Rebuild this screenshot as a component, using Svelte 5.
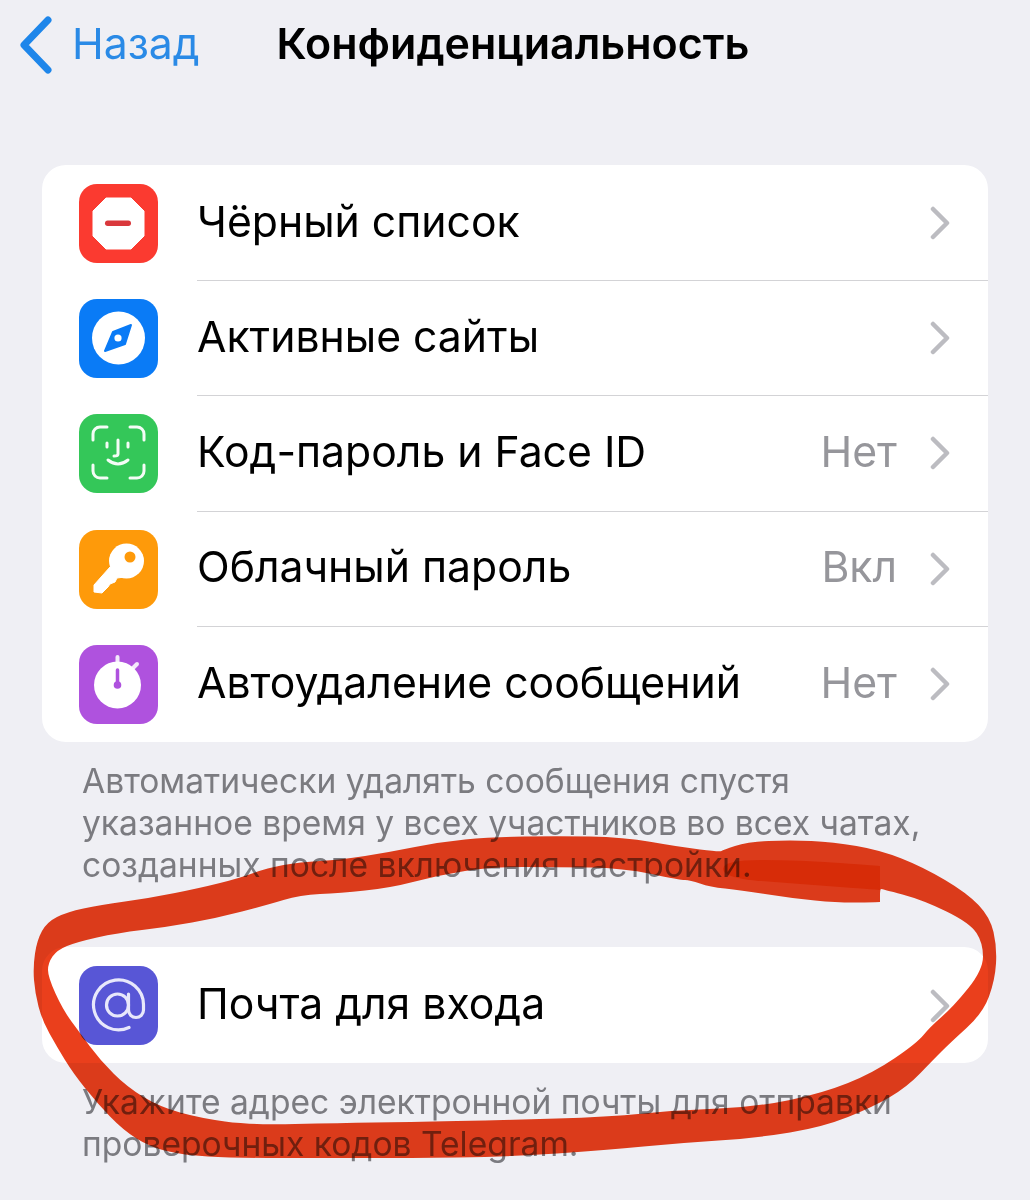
<script>
  const rows = [
    { id: 'block', label: 'Чёрный список', value: '' },
    { id: 'sites', label: 'Активные сайты', value: '' },
    { id: 'face', label: 'Код-пароль и Face ID', value: 'Нет' },
    { id: 'key', label: 'Облачный пароль', value: 'Вкл' },
    { id: 'timer', label: 'Автоудаление сообщений', value: 'Нет' }
  ];

  // marker scribble, traced in page coordinates
  const outer = [[720,852],[680,847],[623,837],[557,836],[490,837],[440,842],[390,852],[340,860],[300,862],[267,868],[240,878],[200,888],[150,898],[100,905],[67,912],[47,922],[37,940],[33,967],[35,993],[42,1020],[57,1047],[73,1073],[97,1103],[123,1130],[150,1147],[183,1155],[233,1158],[340,1158],[407,1158],[507,1157],[607,1150],[680,1143],[757,1138],[823,1127],[873,1107],[907,1087],[933,1060],[950,1043],[983,1013],[995,980],[997,947],[990,917],[967,893],[923,867],[880,850],[833,842],[790,840],[747,842],[723,850]];
  const inner = [[880,902],[880,902],[840,903],[790,898],[740,890],[710,887],[690,880],[680,880],[623,868],[557,867],[490,867],[440,875],[390,888],[340,893],[300,895],[267,905],[217,918],[167,927],[117,933],[77,942],[57,950],[48,963],[48,977],[63,1010],[80,1033],[100,1060],[127,1087],[160,1107],[200,1118],[250,1125],[340,1123],[407,1122],[507,1120],[607,1117],[680,1110],[757,1107],[823,1093],[873,1073],[917,1043],[930,1027],[953,1007],[983,970],[983,943],[970,923],[923,900],[882,889],[880,889]];
  const overlap = [[723,860],[800,860],[880,866],[880,866],[880,890],[880,890],[800,884],[723,878]];

  const smooth = (pts) => {
    const mid = (a, b) => [(a[0] + b[0]) / 2, (a[1] + b[1]) / 2];
    let d = `M${mid(pts[pts.length - 1], pts[0]).join(' ')}`;
    pts.forEach((p, i) => {
      d += ` Q${p.join(' ')} ${mid(p, pts[(i + 1) % pts.length]).join(' ')}`;
    });
    return d + 'Z';
  };
  const ring = smooth(outer) + ' ' + smooth(inner);
</script>

{#snippet chevron()}
  <svg class="chevron" viewBox="0 0 22 34" width="22" height="34">
    <path d="M4 3 L18 17 L4 31" fill="none" stroke="#bcbcc1" stroke-width="4.5" stroke-linecap="round" stroke-linejoin="round" />
  </svg>
{/snippet}

{#snippet icon(id)}
  <svg class="icon {id}" viewBox="0 0 79 79" width="79" height="79">
    {#if id === 'block'}
      <path d="M27 14 H52 L65 27 V52 L52 65 H27 L14 52 V27Z" fill="#fff" stroke="#fff" stroke-width="1" stroke-linejoin="round" />
      <rect x="26" y="36.5" width="26" height="5.5" rx="2.7" fill="#d9383c" />
    {:else if id === 'sites'}
      <circle cx="39.5" cy="39" r="26.5" fill="#fff" />
      <path d="M34 33 L52 26 L46 45 L26 52Z" fill="#0a7bf6" stroke="#0a7bf6" stroke-width="2" stroke-linejoin="round" />
      <circle cx="39" cy="39" r="3.6" fill="#fff" />
    {:else if id === 'face'}
      <g fill="none" stroke="#fff" stroke-width="3" stroke-linecap="round" stroke-linejoin="round" opacity="0.95">
        <path d="M14 26 V20 A7 7 0 0 1 21 13 H28" />
        <path d="M51 13 H58 A7 7 0 0 1 65 20 V26" />
        <path d="M14 51 V57 A7 7 0 0 0 21 64 H28" />
        <path d="M51 64 H58 A7 7 0 0 0 65 57 V51" />
        <path d="M28 29 V33 M49 29 V33" />
        <path d="M39 26 V40 Q39 42 35 42" />
        <path d="M29 46 Q39 54 49 46" />
      </g>
    {:else if id === 'key'}
      <circle cx="47.5" cy="31" r="17.5" fill="#fff" />
      <path d="M31 37 L15 55 V62 L23 63 L29 57 L31 54 L36 52 L38 48 L46 47Z" fill="#fff" stroke="#fff" stroke-linejoin="round" />
      <circle cx="51" cy="27" r="5.5" fill="#fe9a0a" />
    {:else if id === 'timer'}
      <rect x="36.5" y="10" width="4" height="10" rx="2" fill="#f3e9fa" />
      <path d="M53 24 L58 19" stroke="#f3e9fa" stroke-width="4" stroke-linecap="round" />
      <circle cx="38.5" cy="40" r="23.5" fill="#fff" />
      <path d="M38.5 25 V40" stroke="#af52de" stroke-width="3.5" stroke-linecap="round" />
      <circle cx="38.5" cy="40" r="3.8" fill="#af52de" />
    {:else}
      <g fill="none" stroke="#e8e8fb" stroke-width="3.2" stroke-linecap="round">
        <circle cx="38.5" cy="39" r="11" />
        <path d="M49.5 28 V44 A7.5 7.5 0 0 0 64.5 44 V39 A25 25 0 1 0 50 61.5" />
      </g>
    {/if}
  </svg>
{/snippet}

<div class="screen">
  <nav class="nav">
    <svg class="back" viewBox="0 0 36 60" width="36" height="60">
      <path d="M30 5 L6 30 L30 55" fill="none" stroke="#1e86ea" stroke-width="7" stroke-linecap="round" stroke-linejoin="round" />
    </svg>
    <span class="back-label">Назад</span>
    <span class="title">Конфиденциальность</span>
  </nav>

  <section class="card">
    {#each rows as row}
      <div class="row">
        {@render icon(row.id)}
        <div class="row-body">
          <span class="label">{row.label}</span>
          <span class="value">{row.value}</span>
          {@render chevron()}
        </div>
      </div>
    {/each}
  </section>
  <p class="note note-first">Автоматически удалять сообщения спустя<br />указанное время у всех участников во всех чатах,<br />созданных после включения настройки.</p>

  <section class="card card-mail">
    <div class="row">
      {@render icon('mail')}
      <div class="row-body">
        <span class="label">Почта для входа</span>
        <span class="value"></span>
        {@render chevron()}
      </div>
    </div>
  </section>
  <p class="note">Укажите адрес электронной почты для отправки<br />проверочных кодов Telegram.</p>

  <svg class="scribble" viewBox="0 0 1030 1200">
    <path d={ring} fill="#ea3f1c" fill-rule="evenodd" />
    <path d={smooth(overlap)} fill="#e62f08" />
  </svg>
</div>

<style>
  :global(body) {
    margin: 0;
    background: #efeff4;
  }
  .screen {
    position: relative;
    width: 1030px;
    height: 1200px;
    overflow: hidden;
    background: #efeff4;
    font-family: Inter, "Noto Sans", sans-serif;
    color: #000;
  }
  .nav {
    display: flex;
    align-items: center;
    height: 90px;
    padding-left: 18px;
    box-sizing: border-box;
  }
  .back {
    flex: none;
  }
  .back-label {
    margin-left: 18px;
    padding-bottom: 3px;
    font-size: 42.7px;
    color: #2a8ae6;
  }
  .title {
    margin-left: 77px;
    padding-bottom: 4px;
    font-size: 43px;
    font-weight: 600;
  }
  .card {
    margin: 75px 42px 0;
    padding-top: 1px;
    background: #fff;
    border-radius: 24px;
    overflow: hidden;
  }
  .card-mail {
    margin-top: 0;
  }
  .row {
    display: flex;
    align-items: center;
    height: 115.2px;
    padding-left: 37px;
  }
  .icon {
    flex: none;
    border-radius: 18px;
  }
  .block { background: #fb3a30; }
  .sites { background: #0a7bf6; }
  .face { background: #34c759; }
  .key { background: #fe9a0a; }
  .timer { background: #af52de; }
  .mail { background: #5856d6; }
  .row-body {
    flex: 1;
    display: flex;
    align-items: center;
    align-self: stretch;
    margin-left: 39px;
    padding-right: 37px;
    border-bottom: 1px solid #d3d3d6;
  }
  .row:last-child .row-body {
    border-bottom: none;
  }
  .label {
    flex: 1;
    padding-bottom: 4px;
    font-size: 42.7px;
  }
  .value {
    margin-right: 32px;
    padding-bottom: 4px;
    font-size: 42.7px;
    color: #96969b;
  }
  .note {
    margin: 18px 0 61px;
    padding-left: 82px;
    font-size: 33.6px;
    line-height: 42px;
    color: #7b7b80;
  }
  .scribble {
    position: absolute;
    left: 0;
    top: 0;
    width: 1030px;
    height: 1200px;
    mix-blend-mode: multiply;
    filter: blur(0.7px);
  }
</style>
